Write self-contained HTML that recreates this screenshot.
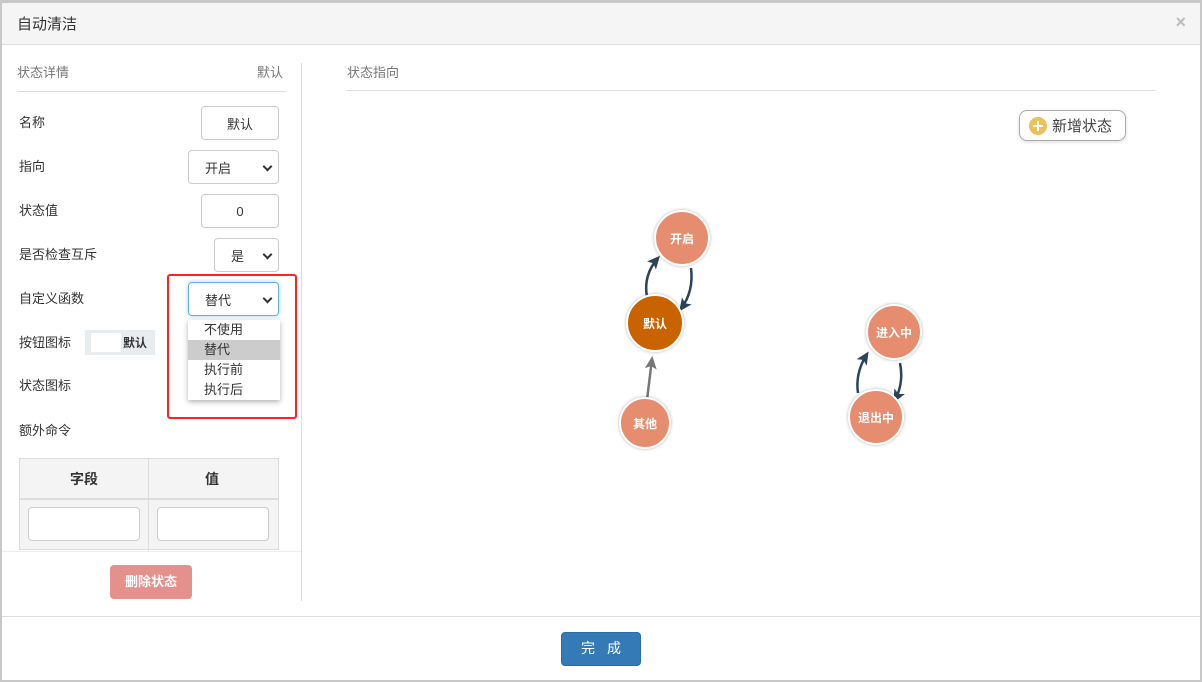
<!DOCTYPE html>
<html><head><meta charset="utf-8"><style>
*{box-sizing:border-box;margin:0;padding:0}
body{width:1202px;height:682px;background:#c8c8c8;font-family:"Liberation Sans","Noto Sans CJK SC",sans-serif;font-size:13px;color:#333;position:relative;overflow:hidden}
.m{position:absolute;left:2px;top:3px;width:1198px;height:677px;background:#fff}
.a{position:absolute}
.hd{left:0;top:0;width:1198px;height:42px;background:#f5f5f5;border-bottom:1px solid #ddd}
.in{position:absolute;border:1px solid #ccc;border-radius:4px;background:#fff;height:34px;font-size:13px;display:flex;align-items:center;justify-content:center}
.sel{justify-content:flex-start;padding-left:16px}
.sel:after{content:"";position:absolute;right:7px;top:12px;width:5px;height:5px;border-right:2px solid #333;border-bottom:2px solid #333;transform:rotate(45deg)}
.lb{position:absolute;left:17px;font-size:13px}
.n{position:absolute;border-radius:50%;background:#e68d6f;border:2px solid #fff;box-shadow:0 0 3px rgba(0,0,0,.3);color:#fff;font-size:12px;font-weight:bold;display:flex;align-items:center;justify-content:center}
</style></head><body>
<div class="m">
<div class="a hd"><span class="a" style="left:15px;top:10px;font-size:15px">自动清洁</span><span class="a" style="right:14px;top:9px;font-size:18px;color:#bbb;font-weight:bold">×</span></div>
<span class="a" style="left:15px;top:59px;color:#777">状态详情</span><span class="a" style="left:255px;top:59px;color:#777">默认</span>
<div class="a" style="left:15px;top:88px;width:269px;border-top:1px solid #ddd"></div>
<div class="a" style="left:299px;top:60px;height:538px;border-left:1px solid #ddd"></div>
<span class="lb" style="top:109px">名称</span><div class="in" style="left:199px;top:103px;width:78px">默认</div>
<span class="lb" style="top:153px">指向</span><div class="in sel" style="left:186px;top:147px;width:91px">开启</div>
<span class="lb" style="top:197px">状态值</span><div class="in" style="left:199px;top:191px;width:78px">0</div>
<span class="lb" style="top:241px">是否检查互斥</span><div class="in sel" style="left:212px;top:235px;width:65px">是</div>
<span class="lb" style="top:285px">自定义函数</span><div class="in sel" style="left:186px;top:279px;width:91px;border-color:#66afe9;box-shadow:0 0 5px rgba(102,175,233,.6)">替代</div>
<div class="a" style="left:186px;top:317px;width:92px;height:80px;background:#fff;box-shadow:0 2px 5px rgba(0,0,0,.3);font-size:13px;line-height:20px">
<div style="padding-left:16px">不使用</div><div style="padding-left:16px;background:#ccc">替代</div><div style="padding-left:16px">执行前</div><div style="padding-left:16px">执行后</div></div>
<div class="a" style="left:165px;top:271px;width:130px;height:145px;border:2px solid #f22;border-radius:3px"></div>
<span class="lb" style="top:329px">按钮图标</span>
<div class="a" style="left:83px;top:327px;width:70px;height:25px;background:#e9ecef"><div class="a" style="left:6px;top:3px;width:30px;height:19px;background:#fff"></div><span class="a" style="left:38px;top:4px;font-size:12px;font-weight:bold">默认</span></div>
<span class="lb" style="top:372px">状态图标</span>
<span class="lb" style="top:417px">额外命令</span>
<div class="a" style="left:17px;top:455px;width:260px;height:92px;background:#f4f4f4;border:1px solid #ddd">
<div class="a" style="left:128px;top:0;height:92px;border-left:1px solid #ddd"></div>
<div class="a" style="left:0;top:39px;width:258px;border-top:2px solid #ddd"></div>
<b class="a" style="left:50px;top:10px;font-size:14px">字段</b><b class="a" style="left:185px;top:10px;font-size:14px">值</b>
<div class="a" style="left:8px;top:48px;width:112px;height:34px;background:#fff;border:1px solid #ccc;border-radius:4px"></div>
<div class="a" style="left:137px;top:48px;width:112px;height:34px;background:#fff;border:1px solid #ccc;border-radius:4px"></div>
</div>
<div class="a" style="left:0;top:548px;width:299px;border-top:1px solid #eee"></div>
<div class="a" style="left:108px;top:562px;width:82px;height:34px;background:#e4908c;border-radius:4px;color:#fff;display:flex;align-items:center;justify-content:center;font-weight:bold;padding-bottom:3px">删除状态</div>
<span class="a" style="left:345px;top:59px;color:#777">状态指向</span>
<div class="a" style="left:344px;top:87px;width:809px;border-top:1px solid #ddd"></div>
<div class="a" style="left:1017px;top:107px;width:107px;height:31px;border:1px solid #aaa;border-radius:8px;box-shadow:0 1px 3px rgba(0,0,0,.15);font-size:15px;color:#444">
<div class="a" style="left:9px;top:6px;width:18px;height:18px;border-radius:50%;background:#ecc05a"><div class="a" style="left:4px;top:8px;width:10px;height:2px;background:#fff"></div><div class="a" style="left:8px;top:4px;width:2px;height:10px;background:#fff"></div></div><span class="a" style="left:32px;top:4px">新增状态</span></div>
<svg class="a" style="left:0;top:0" width="1198" height="677">
<defs><marker id="d" markerWidth="14" markerHeight="14" refX="10" refY="6" orient="auto" markerUnits="userSpaceOnUse"><path d="M0 0L13 6L0 12L3 6Z" fill="#2c4358"/></marker>
<marker id="g" markerWidth="14" markerHeight="14" refX="10" refY="6" orient="auto" markerUnits="userSpaceOnUse"><path d="M0 0L13 6L0 12L3 6Z" fill="#777"/></marker></defs>
<g fill="none" stroke-width="2.5">
<path d="M645 294Q641 272 656 255" stroke="#2c4358" marker-end="url(#d)"/>
<path d="M689 265Q692 288 679 306" stroke="#2c4358" marker-end="url(#d)"/>
<path d="M645 397L650 356" stroke="#777" marker-end="url(#g)"/>
<path d="M856 390Q853 370 865 351" stroke="#2c4358" marker-end="url(#d)"/>
<path d="M898 360Q902 380 893 397" stroke="#2c4358" marker-end="url(#d)"/>
</g></svg>
<div class="n" style="left:652px;top:207px;width:56px;height:56px">开启</div>
<div class="n" style="left:624px;top:291px;width:58px;height:58px;background:#c96300">默认</div>
<div class="n" style="left:617px;top:394px;width:52px;height:52px">其他</div>
<div class="n" style="left:864px;top:301px;width:56px;height:56px">进入中</div>
<div class="n" style="left:846px;top:386px;width:56px;height:56px">退出中</div>
<div class="a" style="left:0;top:613px;width:1198px;border-top:1px solid #ddd"></div>
<div class="a" style="left:559px;top:629px;width:80px;height:34px;background:#337ab7;border:1px solid #2e6da4;border-radius:4px;color:#fff;display:flex;align-items:center;justify-content:center;font-size:14px;letter-spacing:12px;padding-left:12px;padding-bottom:3px">完成</div>
</div>
</body></html>
